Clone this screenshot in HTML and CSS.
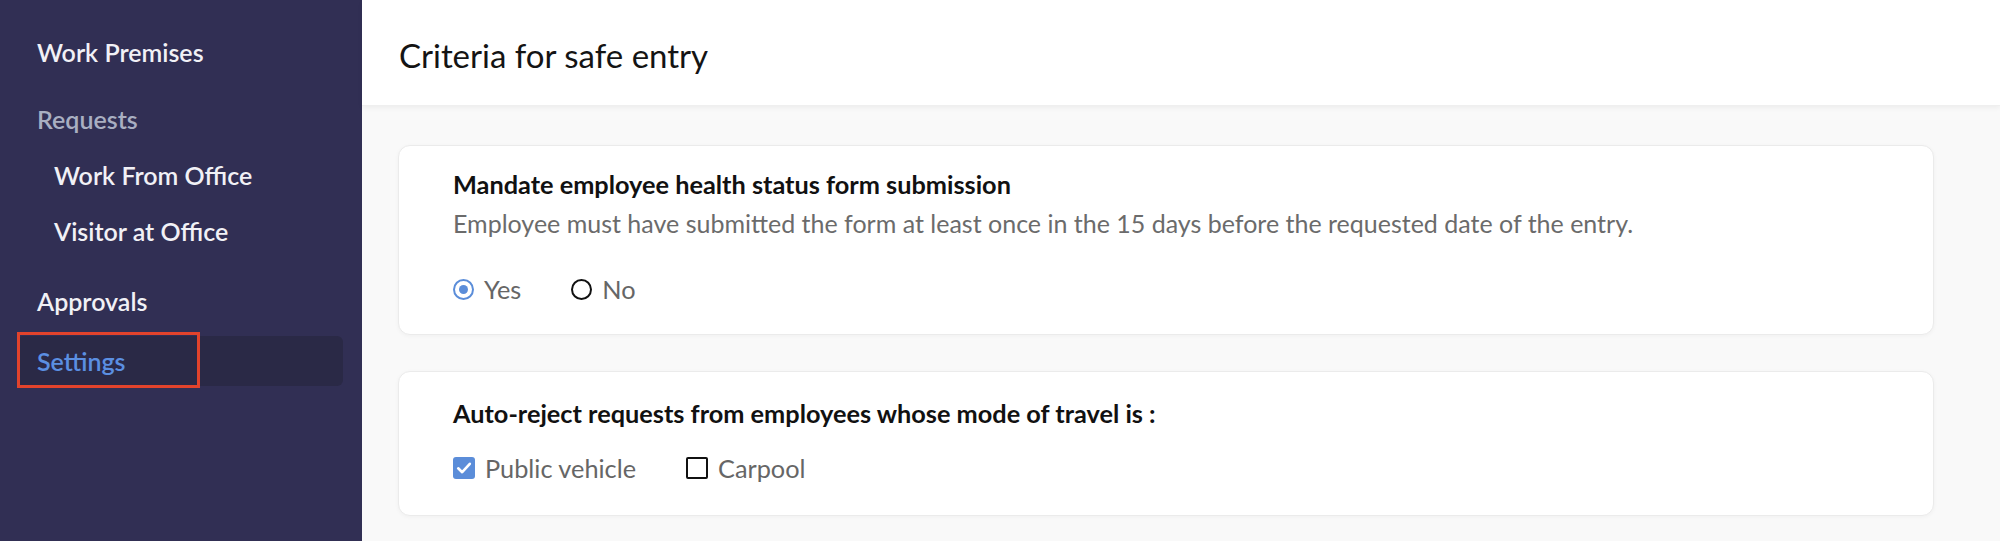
FILE: index.html
```html
<!DOCTYPE html>
<html lang="en">
<head>
<meta charset="utf-8">
<title>Criteria for safe entry</title>
<link rel="stylesheet" href="styles.css">
</head>
<body>
<div class="app">
  <aside class="sidebar">
    <nav class="nav">
      <div class="nav-item">Work Premises</div>
      <div class="nav-section">Requests</div>
      <div class="nav-item sub">Work From Office</div>
      <div class="nav-item sub">Visitor at Office</div>
      <div class="nav-item approvals">Approvals</div>
      <div class="nav-item active">Settings<span class="annot"></span></div>
    </nav>
  </aside>
  <main class="main">
    <header class="header">
      <h1 class="page-title">Criteria for safe entry</h1>
    </header>
    <section class="content">
      <div class="card card-health">
        <div class="card-title">Mandate employee health status form submission</div>
        <div class="card-desc">Employee must have submitted the form at least once in the 15 days before the requested date of the entry.</div>
        <div class="options options-radio">
          <label class="option"><span class="radio checked"></span><span class="opt-label">Yes</span></label>
          <label class="option"><span class="radio"></span><span class="opt-label">No</span></label>
        </div>
      </div>
      <div class="card card-travel">
        <div class="card-title">Auto-reject requests from employees whose mode of travel is :</div>
        <div class="options options-check">
          <label class="option"><span class="check checked"><svg viewBox="0 0 22 22" width="22" height="22"><path d="M5.2 11.3 L9.2 15.2 L16.8 6.8" fill="none" stroke="#fff" stroke-width="2.6" stroke-linecap="round" stroke-linejoin="round"/></svg></span><span class="opt-label">Public vehicle</span></label>
          <label class="option"><span class="check"></span><span class="opt-label">Carpool</span></label>
        </div>
      </div>
    </section>
  </main>
</div>
</body>
</html>
```

FILE: styles.css
```css
* { box-sizing: border-box; }
html, body { margin: 0; padding: 0; }
body {
  font-family: Lato, "Noto Sans", "Liberation Sans", sans-serif;
  background: #f9f9f9;
  width: 2000px;
  height: 541px;
  overflow: hidden;
}
.app {
  display: flex;
  height: 541px;
}
.sidebar {
  width: 362px;
  flex: 0 0 362px;
  background: #312f54;
}
.nav {
  display: flex;
  flex-direction: column;
  gap: 6px;
  padding-top: 27px;
}
.nav-item, .nav-section {
  height: 50px;
  line-height: 50px;
  margin: 0 19px 0 17px;
  padding-left: 20px;
  font-size: 25px;
  font-weight: 600;
  color: #f1f1f6;
  position: relative;
  white-space: nowrap;
}
.nav-section {
  color: #a9afc2;
  margin-top: 11px;
}
.nav-item.sub { padding-left: 37px; }
.nav-item.approvals { margin-top: 14px; }
.nav-item.active {
  margin-top: 4px;
  background: #2a2946;
  border-radius: 6px;
  color: #5b8fe2;
}
.annot {
  position: absolute;
  left: 0;
  top: -4px;
  width: 183px;
  height: 56px;
  border: 3px solid #e2432c;
}
.main {
  flex: 1;
  display: flex;
  flex-direction: column;
}
.header {
  height: 106px;
  background: #fff;
  padding: 4px 0 0 37px;
  display: flex;
  align-items: center;
  box-shadow: 0 2px 5px rgba(0,0,0,0.05);
  border-bottom: 1px solid #efefef;
  position: relative;
}
.page-title {
  margin: 0;
  font-size: 33px;
  font-weight: 400;
  color: #141414;
}
.content {
  padding: 39px 66px 0 36px;
  display: flex;
  flex-direction: column;
  gap: 36px;
}
.card {
  background: #fff;
  border: 1px solid #ebebeb;
  border-radius: 12px;
  box-shadow: 0 1px 4px rgba(0,0,0,0.04);
  padding-left: 54px;
}
.card-health { height: 190px; padding-top: 23px; }
.card-travel { height: 145px; padding-top: 26px; }
.card-title {
  font-size: 25.3px;
  line-height: 30px;
  font-weight: 700;
  color: #111;
  white-space: nowrap;
}
.card-desc {
  margin-top: 9px;
  font-size: 25px;
  line-height: 30px;
  color: #6b6b6b;
  white-space: nowrap;
}
.options {
  display: flex;
  gap: 50px;
}
.options-radio { margin-top: 36px; }
.options-check { margin-top: 25px; }
.option {
  display: flex;
  align-items: center;
  gap: 10px;
  height: 30px;
}
.opt-label {
  font-size: 25.3px;
  line-height: 30px;
  color: #666;
}
.radio {
  width: 21px;
  height: 21px;
  border-radius: 50%;
  border: 2.5px solid #111;
  display: inline-flex;
  align-items: center;
  justify-content: center;
}
.radio.checked {
  border-color: #5b8dd9;
}
.radio.checked::after {
  content: "";
  width: 9px;
  height: 9px;
  border-radius: 50%;
  background: #5b8dd9;
}
.check {
  width: 22px;
  height: 22px;
  border: 2.5px solid #111;
  border-radius: 2px;
  display: inline-flex;
}
.check.checked {
  border: none;
  background: #5b8dd9;
  border-radius: 3px;
}
.check svg { display: block; }
```
